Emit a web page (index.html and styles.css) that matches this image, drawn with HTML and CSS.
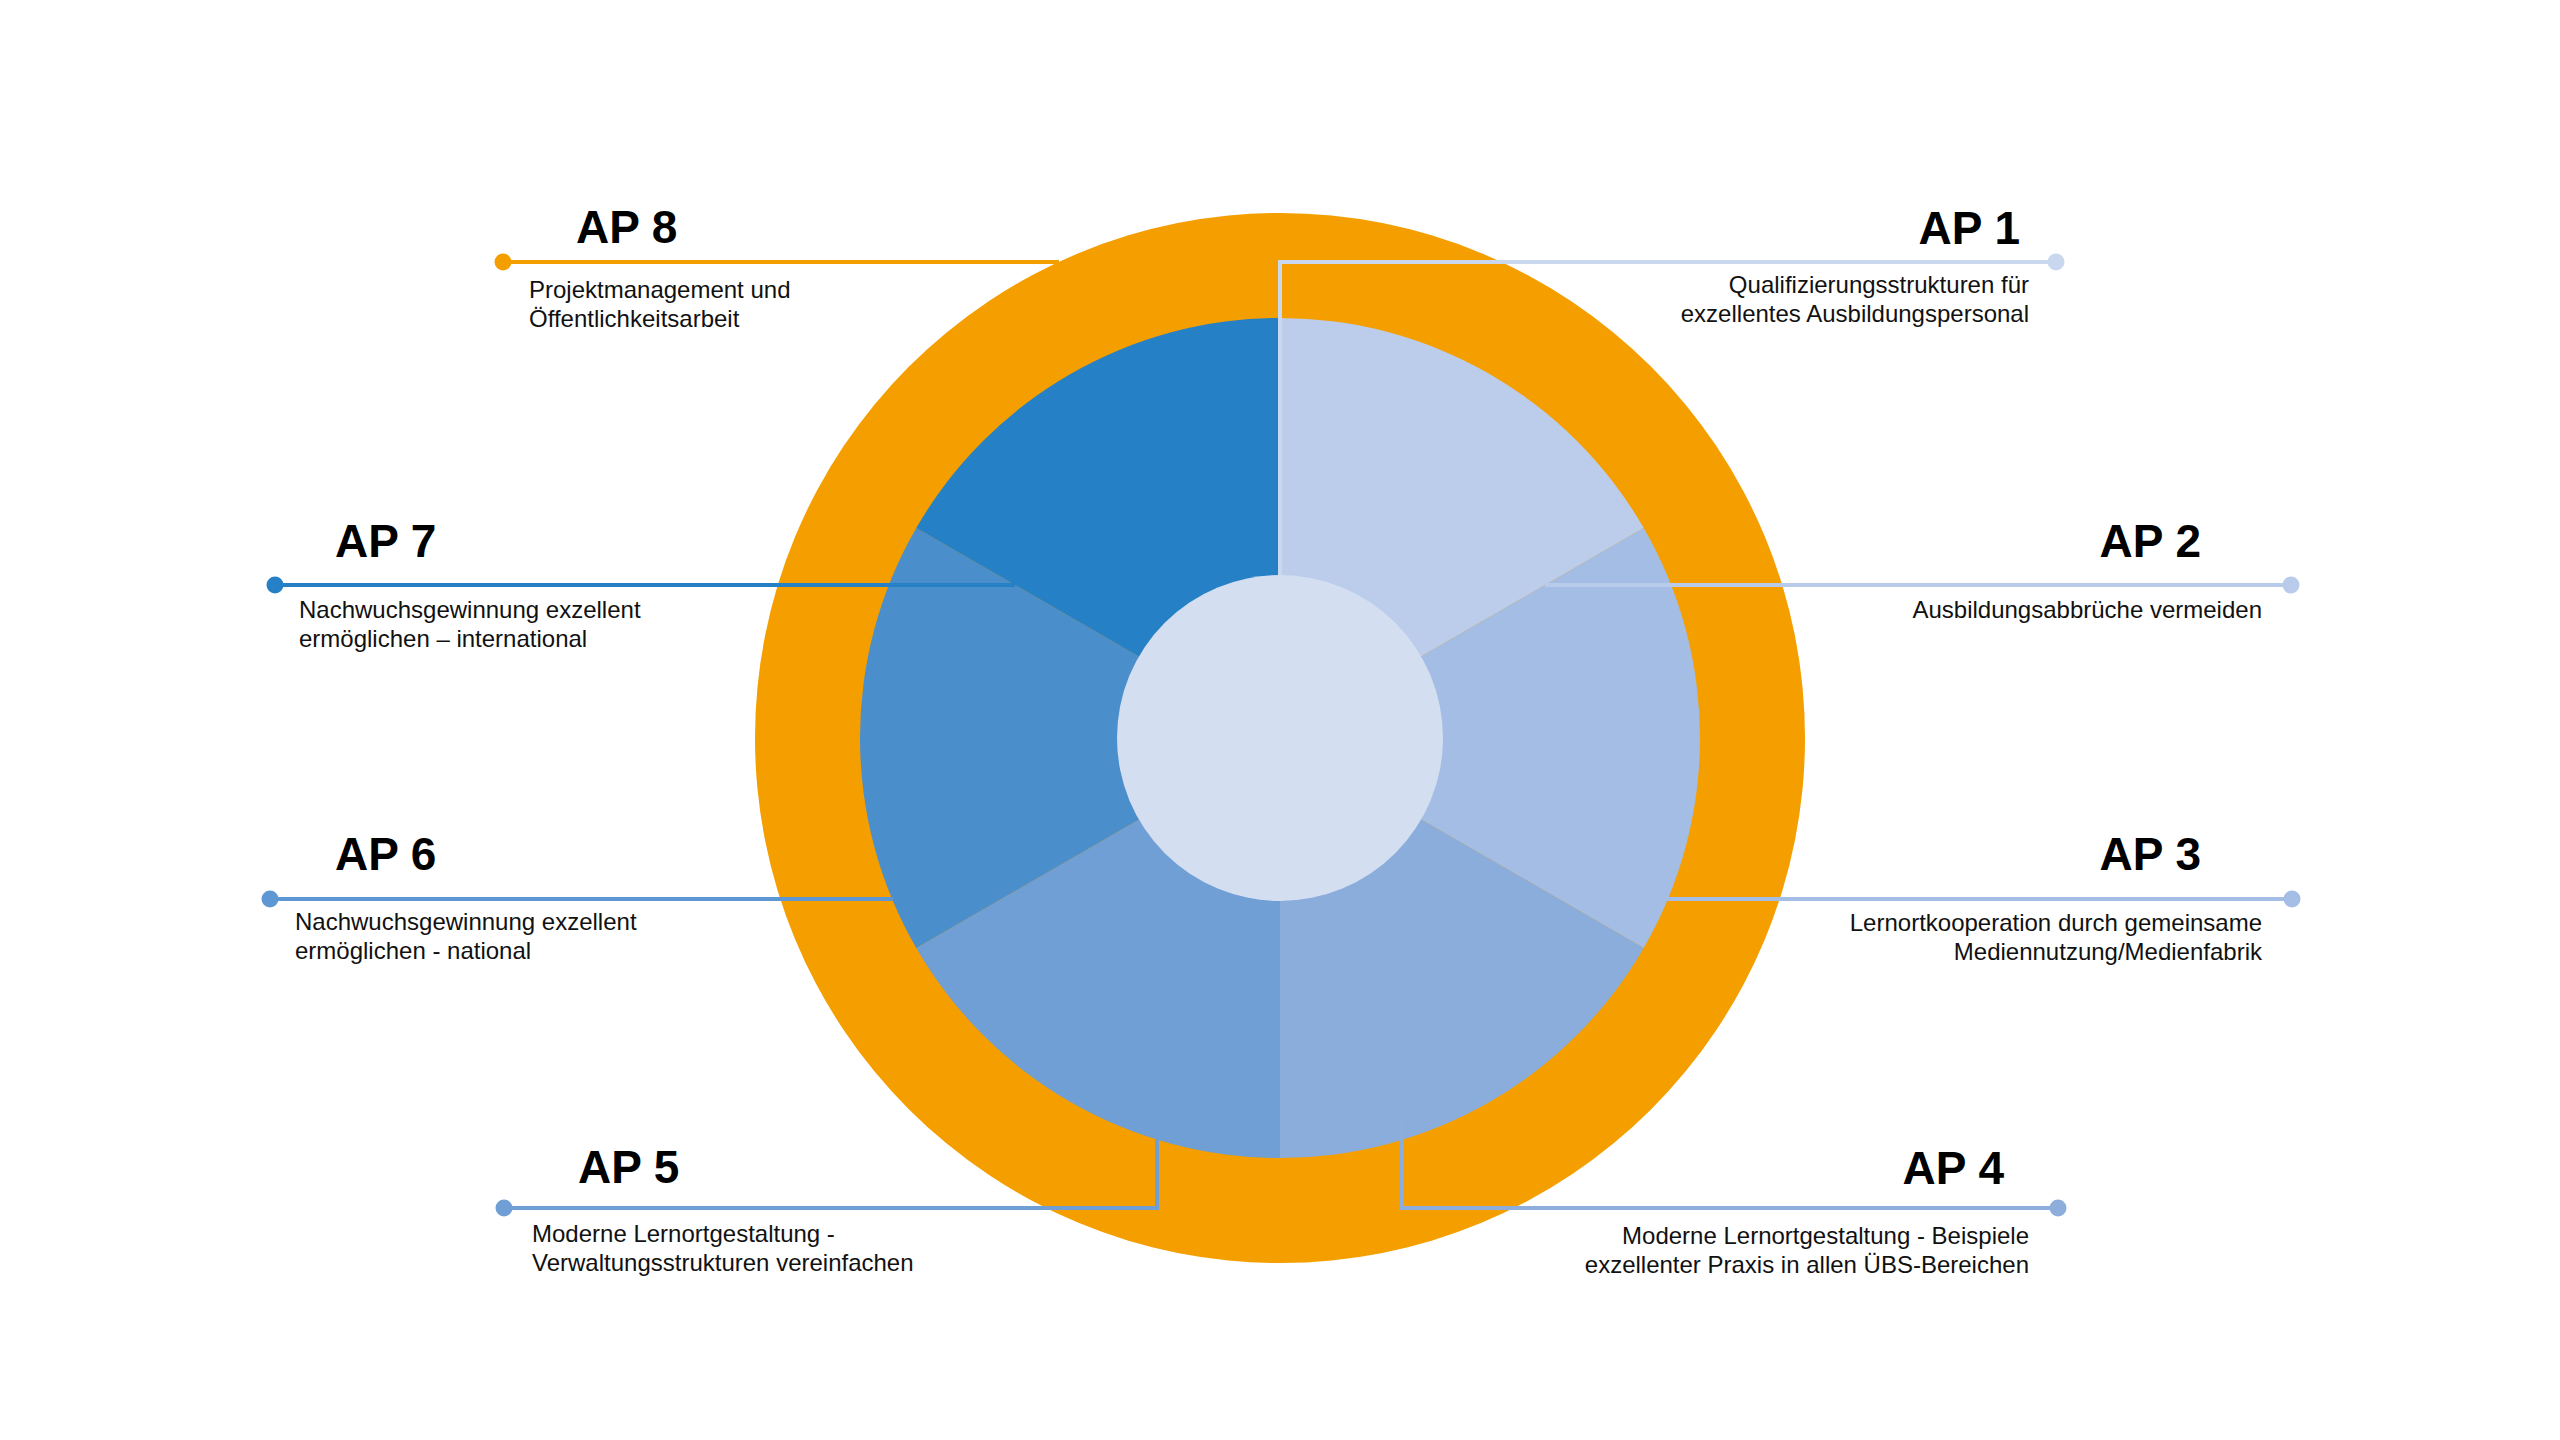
FILE: index.html
```html
<!DOCTYPE html>
<html lang="de">
<head>
<meta charset="utf-8">
<title>Arbeitspakete</title>
<link rel="stylesheet" href="styles.css">
</head>
<body>
<main class="canvas">
  <svg class="wheel" width="2560" height="1440" viewBox="0 0 2560 1440" xmlns="http://www.w3.org/2000/svg">
    <circle cx="1280" cy="738" r="525" fill="#F49E00"/>
    <path d="M1280,738 L1280,318 A420,420 0 0 1 1643.73,528 Z" fill="#BBCDEB"/>
    <path d="M1280,738 L1643.73,528 A420,420 0 0 1 1643.73,948 Z" fill="#A4BDE4"/>
    <path d="M1280,738 L1643.73,948 A420,420 0 0 1 1280,1158 Z" fill="#8AADDB"/>
    <path d="M1280,738 L1280,1158 A420,420 0 0 1 916.27,948 Z" fill="#6F9FD4"/>
    <path d="M1280,738 L916.27,948 A420,420 0 0 1 916.27,528 Z" fill="#4B8ECC"/>
    <path d="M1280,738 L916.27,528 A420,420 0 0 1 1280,318 Z" fill="#2680C6"/>
    <circle cx="1280" cy="738" r="163" fill="#D3DEF1"/>

    <g fill="none" stroke-width="4">
      <polyline points="503,262 1059,262" stroke="#F49E00"/>
      <polyline points="1280,575 1280,262 2056,262" stroke="#C9D7EF"/>
      <polyline points="275,585 1015,585" stroke="#2680C6"/>
      <polyline points="1545,585 2291,585" stroke="#B9CBEA"/>
      <polyline points="270,899 893,899" stroke="#5E98D4"/>
      <polyline points="1667,899 2292,899" stroke="#A5BEE5"/>
      <polyline points="504,1208 1157,1208 1157,1120" stroke="#6F9FD4"/>
      <polyline points="1402,1120 1402,1208 2058,1208" stroke="#8DAEDC"/>
    </g>
    <circle cx="503" cy="262" r="8.5" fill="#F49E00"/>
    <circle cx="2056" cy="262" r="8.5" fill="#C9D7EF"/>
    <circle cx="275" cy="585" r="8.5" fill="#2680C6"/>
    <circle cx="2291" cy="585" r="8.5" fill="#B9CBEA"/>
    <circle cx="270" cy="899" r="8.5" fill="#5E98D4"/>
    <circle cx="2292" cy="899" r="8.5" fill="#A5BEE5"/>
    <circle cx="504" cy="1208" r="8.5" fill="#6F9FD4"/>
    <circle cx="2058" cy="1208" r="8.5" fill="#8DAEDC"/>
  </svg>

  <h2 class="title ap8-t">AP 8</h2>
  <p class="desc ap8-d">Projektmanagement und<br>Öffentlichkeitsarbeit</p>

  <h2 class="title ap7-t">AP 7</h2>
  <p class="desc ap7-d">Nachwuchsgewinnung exzellent<br>ermöglichen – international</p>

  <h2 class="title ap6-t">AP 6</h2>
  <p class="desc ap6-d">Nachwuchsgewinnung exzellent<br>ermöglichen - national</p>

  <h2 class="title ap5-t">AP 5</h2>
  <p class="desc ap5-d">Moderne Lernortgestaltung -<br>Verwaltungsstrukturen vereinfachen</p>

  <h2 class="title right ap1-t">AP 1</h2>
  <p class="desc right ap1-d">Qualifizierungsstrukturen für<br>exzellentes Ausbildungspersonal</p>

  <h2 class="title right ap2-t">AP 2</h2>
  <p class="desc right ap2-d">Ausbildungsabbrüche vermeiden</p>

  <h2 class="title right ap3-t">AP 3</h2>
  <p class="desc right ap3-d">Lernortkooperation durch gemeinsame<br>Mediennutzung/Medienfabrik</p>

  <h2 class="title right ap4-t">AP 4</h2>
  <p class="desc right ap4-d">Moderne Lernortgestaltung - Beispiele<br>exzellenter Praxis in allen ÜBS-Bereichen</p>
</main>
</body>
</html>
```
FILE: styles.css
```css
html, body {
  margin: 0;
  padding: 0;
  background: #ffffff;
}

.canvas {
  position: relative;
  width: 2560px;
  height: 1440px;
  overflow: hidden;
  font-family: "Liberation Sans", Arial, sans-serif;
  color: #000000;
}

.wheel {
  position: absolute;
  left: 0;
  top: 0;
  display: block;
}

.title {
  position: absolute;
  margin: 0;
  font-size: 46px;
  line-height: 46px;
  font-weight: 700;
  white-space: nowrap;
}

.desc {
  position: absolute;
  margin: 0;
  font-size: 24px;
  line-height: 29px;
  font-weight: 400;
  color: #111111;
  white-space: nowrap;
}

.right {
  text-align: right;
}

.ap8-t { left: 576px; top: 204px; }
.ap8-d { left: 529px; top: 275px; }

.ap7-t { left: 335px; top: 518px; }
.ap7-d { left: 299px; top: 595px; }

.ap6-t { left: 335px; top: 831px; }
.ap6-d { left: 295px; top: 907px; }

.ap5-t { left: 578px; top: 1144px; }
.ap5-d { left: 532px; top: 1219px; }

.ap1-t { right: 540px; top: 205px; }
.ap1-d { right: 531px; top: 270px; }

.ap2-t { right: 359px; top: 518px; }
.ap2-d { right: 298px; top: 595px; }

.ap3-t { right: 359px; top: 831px; }
.ap3-d { right: 298px; top: 908px; }

.ap4-t { right: 556px; top: 1145px; }
.ap4-d { right: 531px; top: 1221px; }
```
